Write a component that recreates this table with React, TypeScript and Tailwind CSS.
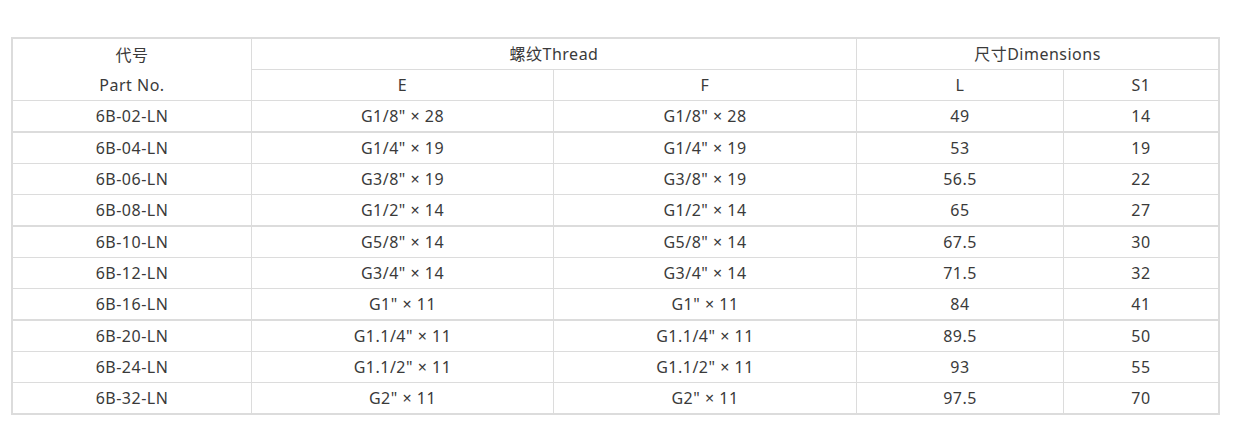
import React from "react";

const rows: { p: string; e: string; f: string; l: string; s: string; thick?: boolean; last?: boolean }[] = [
  { p: "6B-02-LN", e: "G1/8\" × 28", f: "G1/8\" × 28", l: "49", s: "14", thick: true },
  { p: "6B-04-LN", e: "G1/4\" × 19", f: "G1/4\" × 19", l: "53", s: "19" },
  { p: "6B-06-LN", e: "G3/8\" × 19", f: "G3/8\" × 19", l: "56.5", s: "22" },
  { p: "6B-08-LN", e: "G1/2\" × 14", f: "G1/2\" × 14", l: "65", s: "27", thick: true },
  { p: "6B-10-LN", e: "G5/8\" × 14", f: "G5/8\" × 14", l: "67.5", s: "30" },
  { p: "6B-12-LN", e: "G3/4\" × 14", f: "G3/4\" × 14", l: "71.5", s: "32" },
  { p: "6B-16-LN", e: "G1\" × 11", f: "G1\" × 11", l: "84", s: "41", thick: true },
  { p: "6B-20-LN", e: "G1.1/4\" × 11", f: "G1.1/4\" × 11", l: "89.5", s: "50" },
  { p: "6B-24-LN", e: "G1.1/2\" × 11", f: "G1.1/2\" × 11", l: "93", s: "55" },
  { p: "6B-32-LN", e: "G2\" × 11", f: "G2\" × 11", l: "97.5", s: "70", last: true },
];

export default function App() {
  return (
    <div
      className="w-[1257px] h-[439px] bg-white text-[#3a3a3a] text-[16px] tracking-[0.5px]"
      style={{ fontFamily: '"Noto Sans", "Noto Sans CJK SC", sans-serif' }}
    >
      <div className="pt-[37px] pl-[11px]">
        <div className="w-[1209px] border-2 border-[#dcdcdc] grid grid-cols-[239px_302px_303px_207px_154px]">
          <div className="row-span-2 border-r border-b border-[#dcdcdc] flex flex-col">
            <div className="h-[31px] flex items-center justify-center">代号</div>
            <div className="h-[30px] flex items-center justify-center">Part No.</div>
          </div>
          <div className="col-span-2 h-[31px] border-r border-b border-[#dcdcdc] flex items-center justify-center">
            螺纹Thread
          </div>
          <div className="col-span-2 h-[31px] border-b border-[#dcdcdc] flex items-center justify-center">
            尺寸Dimensions
          </div>
          <div className="h-[31px] border-r border-b border-[#dcdcdc] flex items-center justify-center">E</div>
          <div className="h-[31px] border-r border-b border-[#dcdcdc] flex items-center justify-center">F</div>
          <div className="h-[31px] border-r border-b border-[#dcdcdc] flex items-center justify-center">L</div>
          <div className="h-[31px] border-b border-[#dcdcdc] flex items-center justify-center">S1</div>
          {rows.map((r, i) => {
            const b = r.last ? "h-[30px]" : r.thick ? "h-[32px] border-b-2" : "h-[31px] border-b";
            return (
              <React.Fragment key={i}>
                <div className={`${b} border-r border-[#dcdcdc] flex items-center justify-center`}>{r.p}</div>
                <div className={`${b} border-r border-[#dcdcdc] flex items-center justify-center`}>{r.e}</div>
                <div className={`${b} border-r border-[#dcdcdc] flex items-center justify-center`}>{r.f}</div>
                <div className={`${b} border-r border-[#dcdcdc] flex items-center justify-center`}>{r.l}</div>
                <div className={`${b} border-[#dcdcdc] flex items-center justify-center`}>{r.s}</div>
              </React.Fragment>
            );
          })}
        </div>
      </div>
    </div>
  );
}
